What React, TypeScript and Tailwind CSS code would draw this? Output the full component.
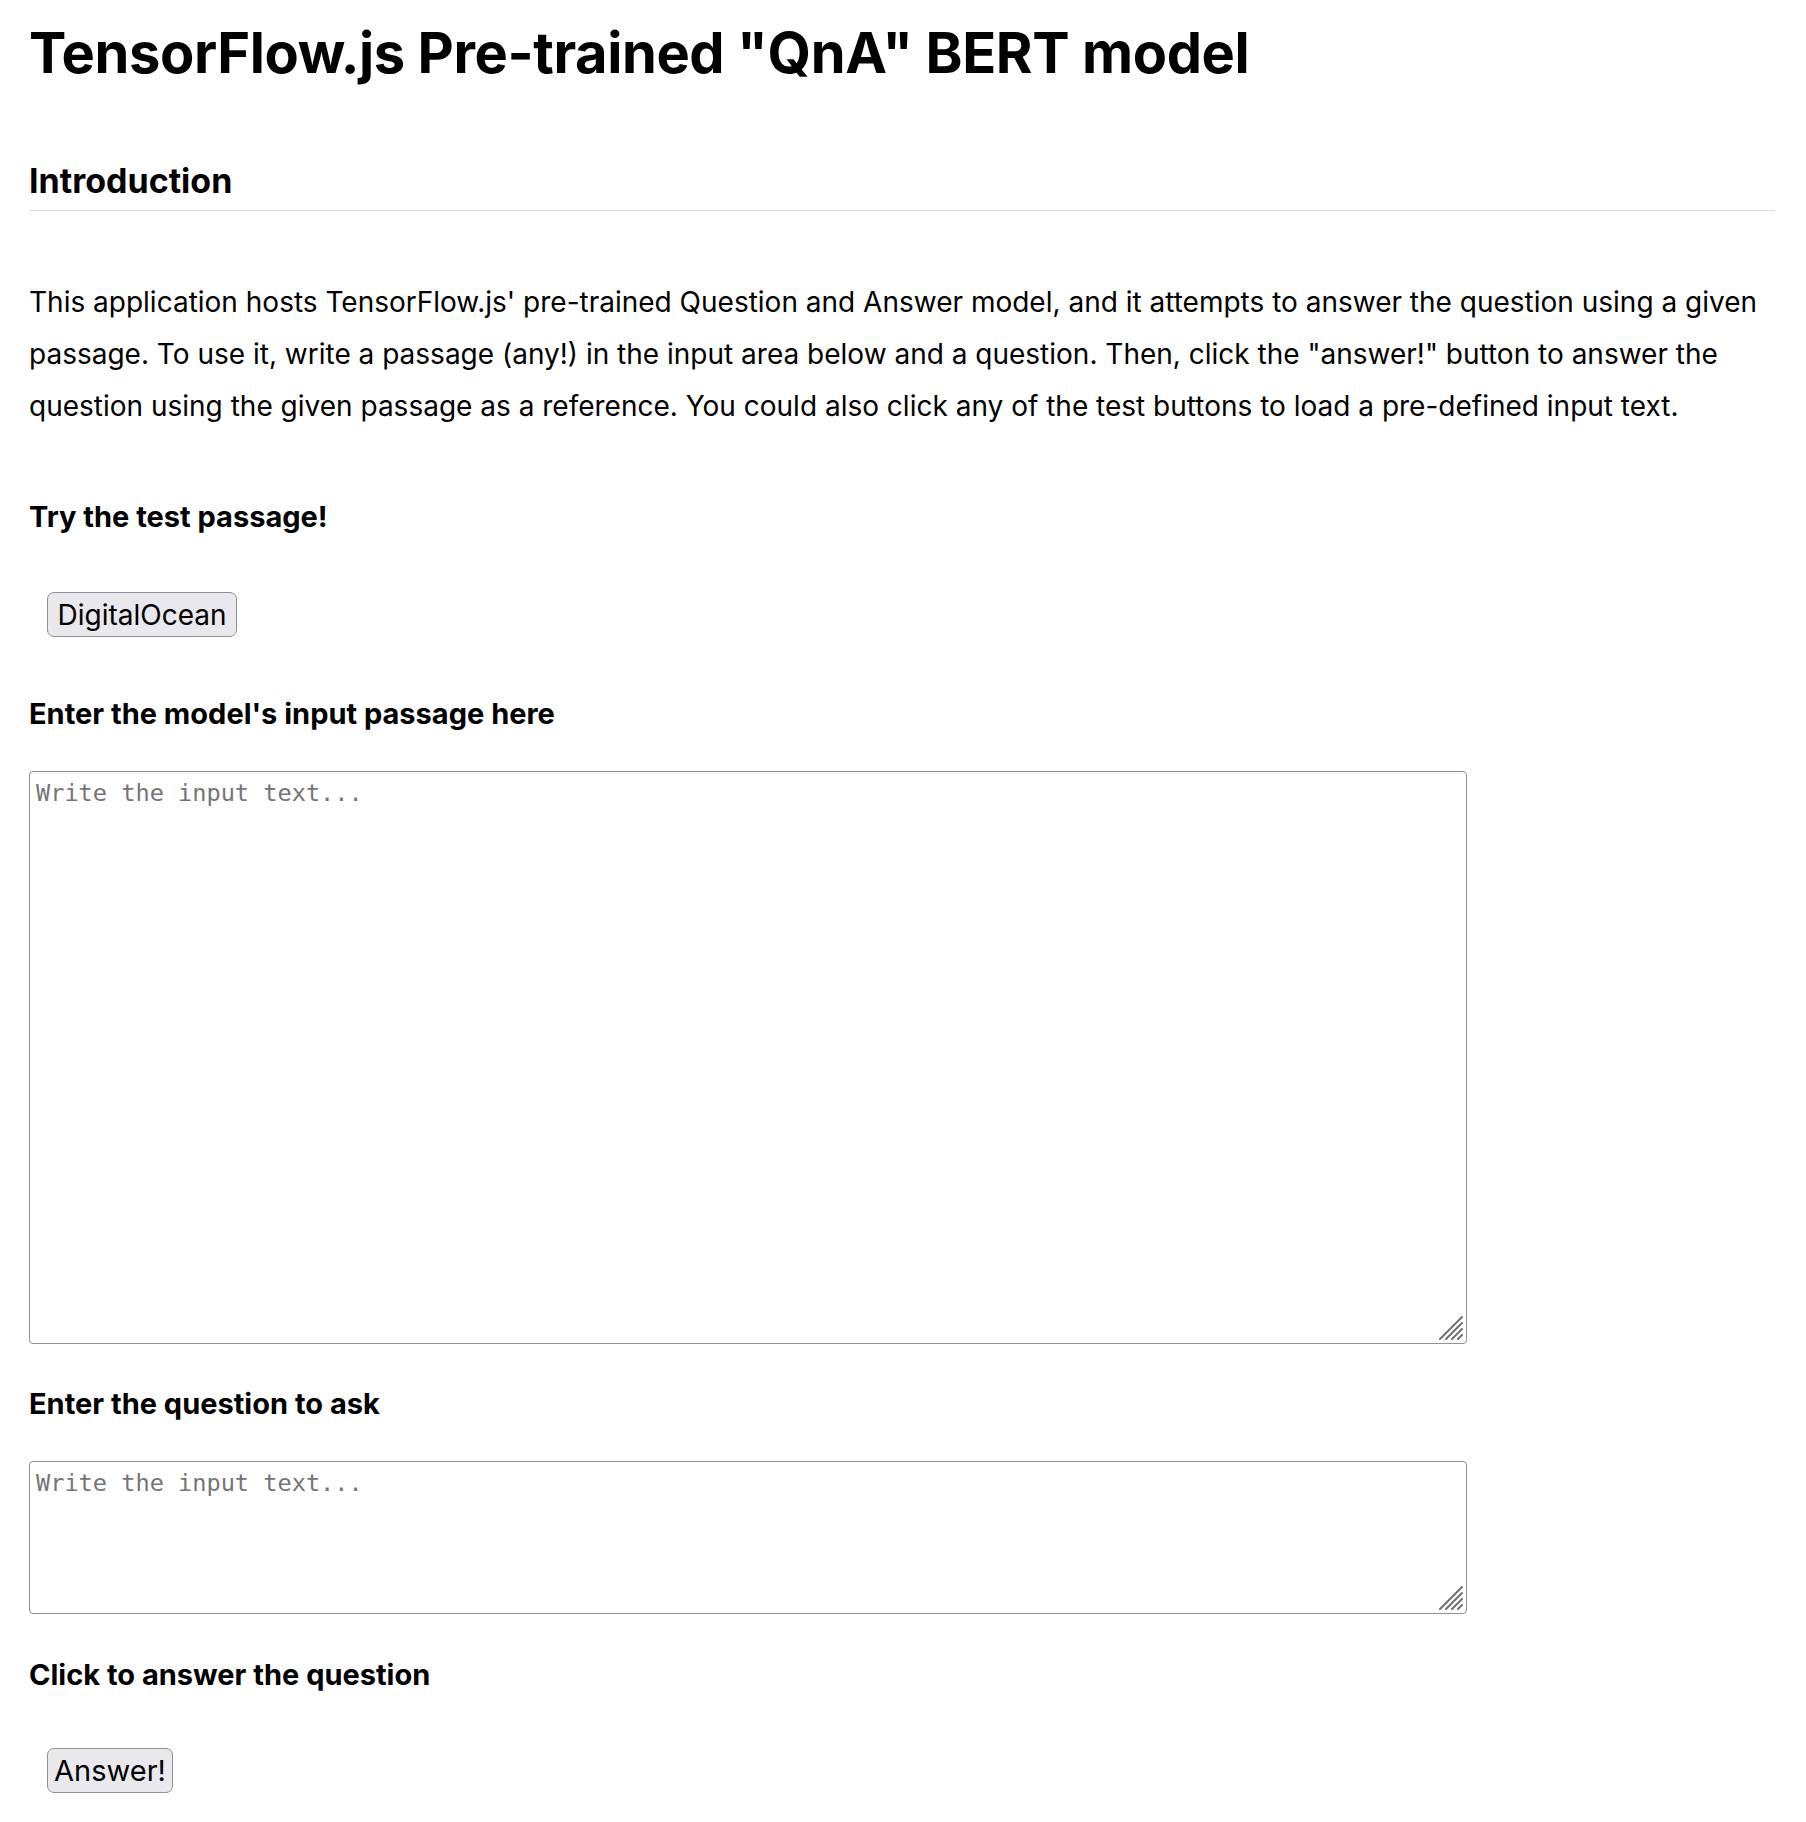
import { useState } from 'react';

const heading = "text-[29px] leading-[29px] font-bold";
const button =
  "h-[45px] rounded-[7px] border border-[#8f8f9d] bg-[#e9e9ed] text-[28px] leading-none text-black";
const textarea =
  "block w-full h-full resize-none rounded-[4px] border border-[#8f8f9d] px-[6px] pt-[8px] pb-[6px] text-[23.6px] leading-[27px] text-black placeholder:text-[#757575] [font-family:'DejaVu_Sans_Mono',monospace] outline-none";

function Grip() {
  return (
    <svg
      className="pointer-events-none absolute right-[4px] bottom-[4px]"
      width="24"
      height="24"
      viewBox="0 0 24 24"
      stroke="#6f6f6f"
      strokeWidth="2"
      strokeLinecap="round"
    >
      <line x1="1" y1="23" x2="23" y2="1" />
      <line x1="7" y1="23" x2="23" y2="7" />
      <line x1="13" y1="23" x2="23" y2="13" />
      <line x1="19" y1="23" x2="23" y2="19" />
    </svg>
  );
}

export default function App() {
  const [passage, setPassage] = useState('');
  const [question, setQuestion] = useState('');

  return (
    <div className="min-h-screen bg-white pt-[25px] pl-[29px] pr-[31px] text-black [font-family:Inter,'Noto_Sans',sans-serif]">
      <h1 className="text-[56px] leading-[56px] font-bold tracking-[-0.4px]">
        TensorFlow.js Pre-trained "QnA" BERT model
      </h1>

      <h2 className="mt-[83px] border-b border-[#dcdcdc] pb-[12px] text-[34px] leading-[34px] font-bold">
        Introduction
      </h2>

      <p className="mt-[65px] text-[28px] leading-[52px]">
        This application hosts TensorFlow.js' pre-trained Question and Answer model, and it attempts to
        answer the question using a given passage. To use it, write a passage (any!) in the input area
        below and a question. Then, click the "answer!" button to answer the question using the given
        passage as a reference. You could also click any of the test buttons to load a pre-defined input
        text.
      </p>

      <h4 className={`mt-[70px] ${heading}`}>Try the test passage!</h4>
      <div className="mt-[61px] pl-[18px]">
        <button
          type="button"
          className={`w-[190px] ${button}`}
          onClick={() =>
            setPassage(
              'DigitalOcean, Inc. is an American cloud infrastructure provider headquartered in New York City with data centers worldwide.'
            )
          }
        >
          DigitalOcean
        </button>
      </div>

      <h4 className={`mt-[62px] ${heading}`}>Enter the model's input passage here</h4>
      <div className="relative mt-[43px] h-[573px] w-[1438px]">
        <textarea
          className={textarea}
          placeholder="Write the input text..."
          value={passage}
          onChange={(e) => setPassage(e.target.value)}
        />
        <Grip />
      </div>

      <h4 className={`mt-[45px] ${heading}`}>Enter the question to ask</h4>
      <div className="relative mt-[43px] h-[153px] w-[1438px]">
        <textarea
          className={textarea}
          placeholder="Write the input text..."
          value={question}
          onChange={(e) => setQuestion(e.target.value)}
        />
        <Grip />
      </div>

      <h4 className={`mt-[46px] ${heading}`}>Click to answer the question</h4>
      <div className="mt-[59px] pl-[18px] pb-[40px]">
        <button type="button" className={`w-[126px] text-[29px] ${button}`}>
          Answer!
        </button>
      </div>
    </div>
  );
}
